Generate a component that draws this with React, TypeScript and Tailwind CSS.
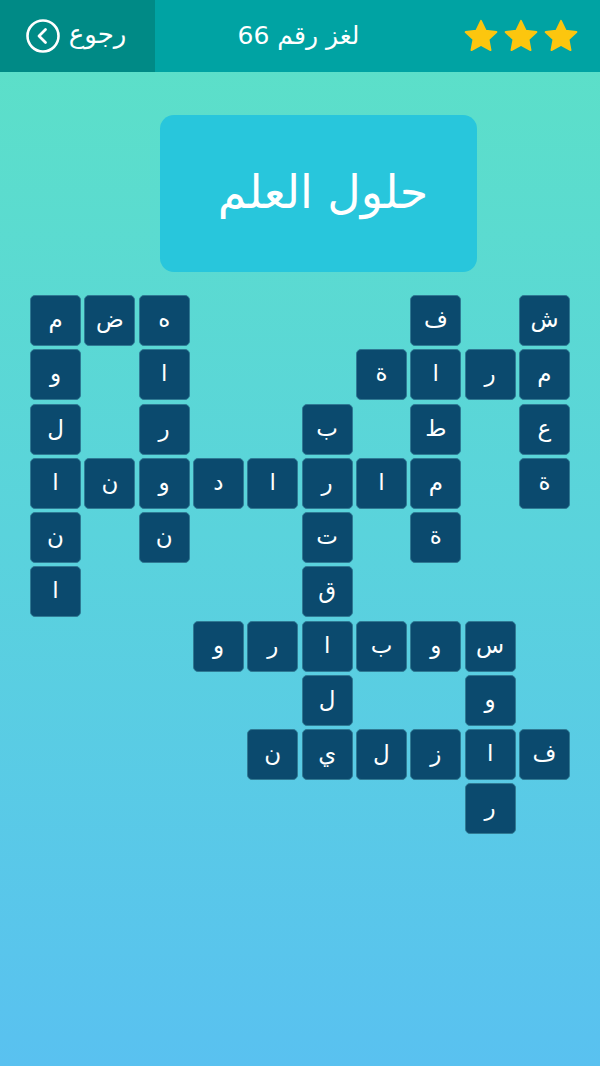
import React from "react";

const rows: string[][] = [
  ["م", "ض", "ه", "", "", "", "", "ف", "", "ش"],
  ["و", "", "ا", "", "", "", "ة", "ا", "ر", "م"],
  ["ل", "", "ر", "", "", "ب", "", "ط", "", "ع"],
  ["ا", "ن", "و", "د", "ا", "ر", "ا", "م", "", "ة"],
  ["ن", "", "ن", "", "", "ت", "", "ة", "", ""],
  ["ا", "", "", "", "", "ق", "", "", "", ""],
  ["", "", "", "و", "ر", "ا", "ب", "و", "س", ""],
  ["", "", "", "", "", "ل", "", "", "و", ""],
  ["", "", "", "", "ن", "ي", "ل", "ز", "ا", "ف"],
  ["", "", "", "", "", "", "", "", "ر", ""],
];

function Star() {
  return (
    <svg width="38" height="37" viewBox="0 0 24 24">
      <path
        d="M12 1.8l3.05 6.4 6.95.9-5.1 4.8 1.3 6.95L12 17.5l-6.2 3.35 1.3-6.95L2 9.1l6.95-.9z"
        fill="#fcc60e"
        stroke="#fcc60e"
        strokeWidth="1.2"
        strokeLinejoin="round"
      />
    </svg>
  );
}

export default function App() {
  return (
    <div
      className="w-[600px] h-[1066px] overflow-hidden bg-gradient-to-b from-[#5ce1c6] via-[#5ad3dc] to-[#59c1f0]"
      style={{ fontFamily: '"DejaVu Sans", "Noto Sans", sans-serif' }}
    >
      <div className="h-[72px] bg-[#00a3a3] flex items-stretch">
        <div className="w-[155px] bg-[#008a86] flex items-center justify-center gap-[8px] pr-[4px]">
          <svg width="36" height="36" viewBox="0 0 36 36">
            <circle cx="18" cy="18" r="15.5" fill="none" stroke="white" strokeWidth="2.6" />
            <path d="M20.5 11.5L14 18l6.5 6.5" fill="none" stroke="white" strokeWidth="2.8" strokeLinecap="round" strokeLinejoin="round" />
          </svg>
          <span className="text-white text-[26px] leading-none pb-[4px]" dir="rtl">رجوع</span>
        </div>
        <div className="flex-1 flex items-center justify-center pr-[20px]">
          <span className="text-white text-[25px] leading-none pb-[2px]" dir="rtl">لغز رقم 66</span>
        </div>
        <div className="flex items-center gap-[2px] pr-[20px]">
          <Star />
          <Star />
          <Star />
        </div>
      </div>

      <div className="flex justify-center pt-[43px] pl-[36px]">
        <div className="w-[317px] h-[157px] rounded-[14px] bg-[#28c6dc] flex items-center justify-center">
          <span className="text-white text-[46px] leading-none pb-[4px] pl-[10px]" dir="rtl">حلول العلم</span>
        </div>
      </div>

      <div className="mt-[23px] ml-[30px] grid grid-cols-[repeat(10,51px)] auto-rows-[51px] gap-x-[3.33px] gap-y-[3.25px]">
        {rows.flatMap((r, i) =>
          r.map((ch, j) =>
            ch ? (
              <div
                key={`${i}-${j}`}
                className="rounded-[5px] bg-[#0b4a6e] border border-[#2f7a94] flex items-center justify-center text-white text-[23px] leading-none"
              >
                <span className="pb-[2px]">{ch}</span>
              </div>
            ) : (
              <div key={`${i}-${j}`} />
            )
          )
        )}
      </div>
    </div>
  );
}
